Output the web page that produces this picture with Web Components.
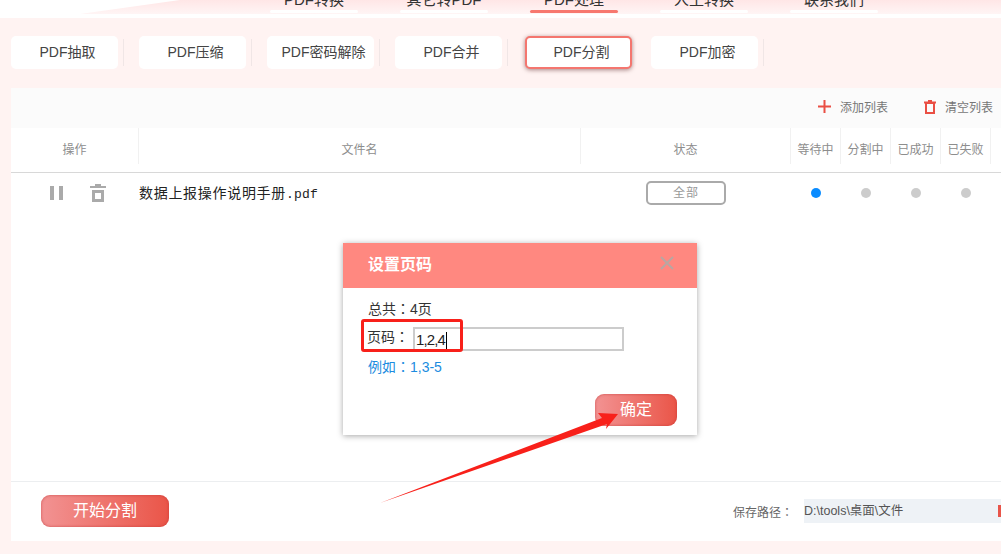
<!DOCTYPE html>
<html>
<head>
<meta charset="utf-8">
<style>
  html, body { margin: 0; padding: 0; width: 1001px; height: 554px; overflow: hidden; background: #fff3f2; }
  body { font-family: "Liberation Sans", "Noto Sans CJK SC", sans-serif; color: #333; }
</style>
</head>
<body>
<app-shell></app-shell>

<script>
const FONT = `"Liberation Sans", "Noto Sans CJK SC", sans-serif`;
// TC has the centred full-width colon the reference shows
const FONT_COLON = `"Liberation Sans", "Noto Sans CJK TC", sans-serif`;

class TopNav extends HTMLElement {
  constructor(){
    super();
    const items = [["PDF转换",""],["其它转PDF",""],["PDF处理","on"],["人工转换",""],["联系我们",""]];
    this.attachShadow({mode:'open'}).innerHTML = `
      <style>
        :host { display:block; height:18px; overflow:hidden; position:relative;
          background:linear-gradient(180deg,#ffe6e6 0,#fff5f5 14px); }
        .wedge { position:absolute; left:0; top:0; width:200px; height:14px; }
        nav { position:relative; display:flex; padding-left:270px; gap:42px; height:13px; }
        a { width:88px; height:13px; position:relative; text-align:center; font:15px/15px ${FONT}; color:#333; white-space:nowrap; }
        a span { position:absolute; left:0; right:0; top:-8px; }
        a i { position:absolute; left:0; right:0; bottom:0; height:3px; background:#fff; border-radius:2px; }
        a.on i { background:#f7786f; }
        .rule { position:absolute; left:0; right:0; top:14px; height:4px; background:#fff; }
      </style>
      <svg class="wedge" viewBox="0 0 200 14"><path d="M0 0H180L80 14H0Z" fill="#fff"/></svg>
      <nav>${items.map(i=>`<a class="${i[1]}"><span>${i[0]}</span><i></i></a>`).join('')}</nav>
      <div class="rule"></div>`;
  }
}
customElements.define('top-nav', TopNav);

class SubTab extends HTMLElement {
  constructor(){
    super();
    this.attachShadow({mode:'open'}).innerHTML = `
      <style>
        :host { display:block; width:107px; height:33px; box-sizing:border-box; background:#fff; border-radius:5px;
          font:14px/33px ${FONT}; color:#444; text-align:center; padding-left:6px; white-space:nowrap; position:relative; }
        :host([active]) { border:2px solid #f4766f; line-height:29px; box-shadow:0 1px 4px rgba(90,40,40,.55);
          margin:0 -2px 0 2px; }
        :host::after { content:""; position:absolute; right:-6px; top:3px; width:1px; height:27px; background:#f0e6e6; }
        :host([active])::after { display:none; }
      </style><slot></slot>`;
  }
}
customElements.define('sub-tab', SubTab);

class GridHead extends HTMLElement {
  constructor(){
    super();
    this.attachShadow({mode:'open'}).innerHTML = `
      <style>
        :host { display:grid; grid-template-columns:128px 442px 210px 50px 50px 50px 50px; height:44px;
          border-bottom:1px solid #d8d8d8; font:12px/44px ${FONT}; color:#8d8d8d; text-align:center; }
        div { border-right:1px solid #f1f1f1; height:36px; white-space:nowrap; box-sizing:border-box; }
      </style>
      <div>操作</div><div>文件名</div><div>状态</div><div>等待中</div><div>分割中</div><div>已成功</div><div>已失败</div>`;
  }
}
customElements.define('grid-head', GridHead);

class FileRow extends HTMLElement {
  constructor(){
    super();
    this.attachShadow({mode:'open'}).innerHTML = `
      <style>
        :host { display:grid; grid-template-columns:128px 442px 210px 50px 50px 50px 50px; height:40px; align-items:center; }
        .ops { display:flex; align-items:center; padding-left:39px; gap:27px; }
        .name { font:14px "Noto Sans CJK SC", sans-serif; letter-spacing:.7px; color:#222; white-space:nowrap; margin-top:-3px; }
        .name b { font:13px "Liberation Mono", monospace; letter-spacing:.2px; }
        .state { display:flex; justify-content:center; }
        .all { width:80px; height:24px; box-sizing:border-box; border:2px solid #aaa; border-radius:5px; text-align:center; font:12px/20px ${FONT}; color:#999; letter-spacing:1px; }
        .dot { width:10px; height:10px; border-radius:50%; background:#ccc; justify-self:center; }
        .dot.on { background:#0a8cff; }
      </style>
      <div class="ops">
        <svg width="13" height="14" viewBox="0 0 13 14"><rect x="0" width="4" height="14" fill="#aaa"/><rect x="9" width="4" height="14" fill="#aaa"/></svg>
        <svg width="16" height="18" viewBox="0 0 16 18"><path d="M5 0h6v2h5v2H0V2h5zM2 6h12v12H2zM5 9v6h6V9z" fill="#aaa" fill-rule="evenodd"/></svg>
      </div>
      <div class="name">数据上报操作说明手册<b>.pdf</b></div>
      <div class="state"><div class="all">全部</div></div>
      <div class="dot on"></div><div class="dot"></div><div class="dot"></div><div class="dot"></div>`;
  }
}
customElements.define('file-row', FileRow);

class GradButton extends HTMLElement {
  constructor(){
    super();
    this.attachShadow({mode:'open'}).innerHTML = `
      <style>
        :host { display:block; height:32px; border-radius:9px; background:linear-gradient(90deg,#f29393,#ea5548);
          box-shadow:inset 0 0 3px rgba(190,50,50,.7); color:#fff; text-align:center; font:16px/32px ${FONT}; }
      </style><slot></slot>`;
  }
}
customElements.define('grad-button', GradButton);

class PageDialog extends HTMLElement {
  constructor(){
    super();
    this.attachShadow({mode:'open'}).innerHTML = `
      <style>
        :host { display:block; position:absolute; left:343px; top:243px; width:354px; height:192px; background:#fff;
          box-shadow:0 1px 6px rgba(0,0,0,.35); font:14px ${FONT_COLON}; color:#333; }
        header { height:45px; background:#ff8880; color:#fff; font:bold 16px/44px ${FONT}; padding-left:25px; position:relative; }
        header svg { position:absolute; left:317px; top:13px; }
        .body { padding:11px 25px 0; }
        .total { height:21px; line-height:21px; }
        .field { display:flex; align-items:flex-start; height:24px; margin-top:7px; margin-left:-1px; gap:5px; }
        .label { width:41px; white-space:nowrap; line-height:20px; }
        .input { width:211px; height:24px; box-sizing:border-box; border:2px solid #ccc; font:15px/21px ${FONT}; letter-spacing:-.9px; color:#222; padding-left:1px; }
        .caret { display:inline-block; width:1px; height:17px; margin-left:1px; background:#000; vertical-align:-4px; }
        .hint { color:#1c8ce0; line-height:20px; margin-top:6px; }
        grad-button { position:absolute; left:252px; top:151px; width:82px; }
      </style>
      <header>设置页码<svg width="14" height="14" viewBox="0 0 14 14"><path d="M1 1l12 12M13 1L1 13" stroke="#b9a6a2" stroke-width="2"/></svg></header>
      <div class="body">
        <div class="total">总共：4页</div>
        <div class="field"><span class="label">页码：</span><div class="input">1,2,4<span class="caret"></span></div></div>
        <div class="hint">例如：1,3-5</div>
      </div>
      <grad-button>确定</grad-button>`;
  }
}
customElements.define('page-dialog', PageDialog);

class AppShell extends HTMLElement {
  constructor(){
    super();
    const tabs = ["PDF抽取","PDF压缩","PDF密码解除","PDF合并","PDF分割","PDF加密"];
    this.attachShadow({mode:'open'}).innerHTML = `
      <style>
        :host { display:block; width:1001px; height:554px; overflow:hidden; position:relative; font-family:${FONT}; }
        .tabs { display:flex; gap:21px; padding:18px 0 0 11px; height:52px; }
        .panel { width:990px; margin-left:11px; height:453px; background:#fff; display:flex; flex-direction:column; }
        .bar { height:40px; box-sizing:border-box; padding:0 8px 3px 0; background:#fbfbfb; display:flex; justify-content:flex-end; align-items:center; font-size:12px; color:#777; }
        .bar span { display:flex; align-items:center; gap:9px; white-space:nowrap; }
        .bar .add { margin-right:36px; }
        .list { flex:1; }
        .foot { height:59px; border-top:1px solid #eceef0; display:flex; align-items:center; }
        .foot grad-button { width:128px; margin-left:30px; margin-top:-1px; }
        .save { margin-left:auto; display:flex; align-items:center; font:12px ${FONT_COLON}; color:#666; margin-top:-1px; }
        .path { width:197px; height:24px; margin-left:11px; background:#eef2f6; color:#555; font-size:12.500px; line-height:25px; position:relative; }
        .path i { position:absolute; right:0; top:6px; width:3px; height:12px; background:#e8554a; }
        .arrow { position:absolute; left:0; top:0; pointer-events:none; }
        .mark { position:absolute; left:361px; top:319px; width:102px; height:33px; box-sizing:border-box; border:3px solid #f8201a; border-radius:3px; }
      </style>
      <top-nav></top-nav>
      <div class="tabs">${tabs.map((t,i)=>`<sub-tab ${i===4?'active':''}>${t}</sub-tab>`).join('')}</div>
      <div class="panel">
        <div class="bar">
          <span class="add"><svg width="13" height="13" viewBox="0 0 13 13"><path d="M5.500 0h2v5.500H13v2H7.500V13h-2V7.500H0v-2h5.500z" fill="#ea4f44"/></svg>添加列表</span>
          <span><svg width="12" height="14" viewBox="0 0 12 14"><path d="M4 0h4v1.500h4v2h-1V14H1V3.500H0v-2h4zM3 4v8h6V4z" fill="#ea4f44" fill-rule="evenodd"/></svg>清空列表</span>
        </div>
        <grid-head></grid-head>
        <div class="list"><file-row></file-row></div>
        <div class="foot">
          <grad-button>开始分割</grad-button>
          <div class="save">保存路径：<div class="path">D:\\tools\\桌面\\文件<i></i></div></div>
        </div>
      </div>
      <page-dialog></page-dialog>
      <div class="mark"></div>
      <svg class="arrow" width="1001" height="554"><path d="M380 503L602 418L598 413L618 414L606 429L607 424Z" fill="#f8201a"/></svg>`;
  }
}
customElements.define('app-shell', AppShell);
</script>
</body>
</html>
